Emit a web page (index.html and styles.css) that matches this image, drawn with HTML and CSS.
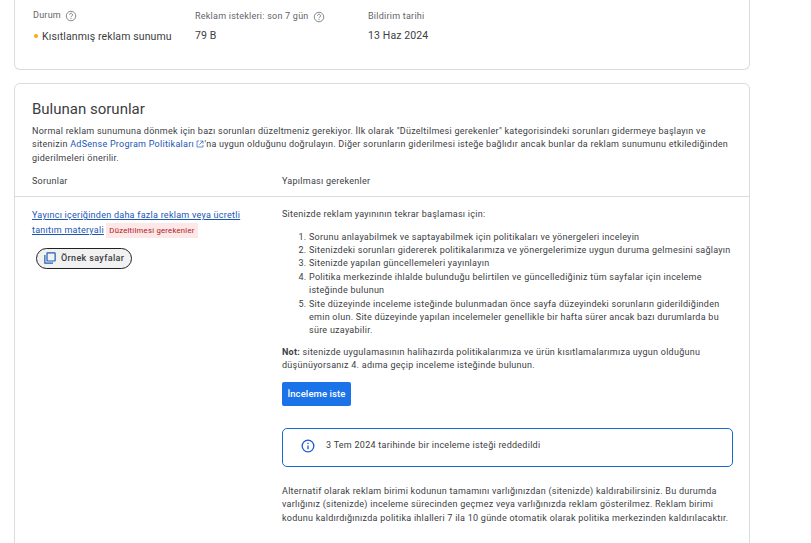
FILE: index.html
```html
<!DOCTYPE html>
<html lang="tr">
<head>
<meta charset="utf-8">
<title>Bulunan sorunlar</title>
<link rel="stylesheet" href="styles.css">
</head>
<body>
<main class="page">
  <section class="card summary">
    <div class="stat stat-status">
      <div class="stat-label">Durum
        <svg class="help" viewBox="0 0 24 24"><circle cx="12" cy="12" r="9.5"/><path d="M9 9.5a3 3 0 1 1 4.6 2.5c-1 .7-1.6 1.3-1.6 2.5"/><circle class="dot" cx="12" cy="17.2" r="1"/></svg>
      </div>
      <div class="stat-value"><span class="status-dot"></span>Kısıtlanmış reklam sunumu</div>
    </div>
    <div class="stat stat-requests">
      <div class="stat-label label-low">Reklam istekleri: son 7 gün
        <svg class="help" viewBox="0 0 24 24"><circle cx="12" cy="12" r="9.5"/><path d="M9 9.5a3 3 0 1 1 4.6 2.5c-1 .7-1.6 1.3-1.6 2.5"/><circle class="dot" cx="12" cy="17.2" r="1"/></svg>
      </div>
      <div class="stat-value">79 B</div>
    </div>
    <div class="stat">
      <div class="stat-label label-low">Bildirim tarihi</div>
      <div class="stat-value">13 Haz 2024</div>
    </div>
  </section>

  <section class="card issues">
    <header class="issues-head">
      <h2>Bulunan sorunlar</h2>
      <p>Normal reklam sunumuna dönmek için bazı sorunları düzeltmeniz gerekiyor. İlk olarak "Düzeltilmesi gerekenler" kategorisindeki sorunları gidermeye başlayın ve sitenizin <a class="plain-link" href="#">AdSense Program Politikaları <svg class="ext" viewBox="0 0 12 12"><path d="M4.5 1.5H1.5v9h9v-3M6.5 1.5h4v4M10.5 1.5 5 7"/></svg></a>'na uygun olduğunu doğrulayın. Diğer sorunların giderilmesi isteğe bağlıdır ancak bunlar da reklam sunumunu etkilediğinden giderilmeleri önerilir.</p>
    </header>
    <div class="columns columns-head">
      <div class="col-left">Sorunlar</div>
      <div class="col-right">Yapılması gerekenler</div>
    </div>
    <div class="columns columns-body">
      <div class="col-left">
        <div class="issue-title"><a href="#">Yayıncı içeriğinden daha fazla reklam veya ücretli tanıtım materyali</a> <span class="tag">Düzeltilmesi gerekenler</span></div>
        <button class="chip" type="button">
          <svg viewBox="0 0 14 14"><path class="chip-back" d="M1 3.5V13h9.5"/><rect x="3.5" y="1" width="9.5" height="9.5" rx=".6"/></svg>
          Örnek sayfalar
        </button>
      </div>
      <div class="col-right">
        <p class="intro">Sitenizde reklam yayınının tekrar başlaması için:</p>
        <ol>
          <li>Sorunu anlayabilmek ve saptayabilmek için politikaları ve yönergeleri inceleyin</li>
          <li>Sitenizdeki sorunları gidererek politikalarımıza ve yönergelerimize uygun duruma gelmesini sağlayın</li>
          <li>Sitenizde yapılan güncellemeleri yayınlayın</li>
          <li>Politika merkezinde ihlalde bulunduğu belirtilen ve güncellediğiniz tüm sayfalar için inceleme isteğinde bulunun</li>
          <li>Site düzeyinde inceleme isteğinde bulunmadan önce sayfa düzeyindeki sorunların giderildiğinden emin olun. Site düzeyinde yapılan incelemeler genellikle bir hafta sürer ancak bazı durumlarda bu süre uzayabilir.</li>
        </ol>
        <p class="note"><strong>Not:</strong> sitenizde uygulamasının halihazırda politikalarımıza ve ürün kısıtlamalarımıza uygun olduğunu düşünüyorsanız 4. adıma geçip inceleme isteğinde bulunun.</p>
        <button class="primary" type="button">İnceleme iste</button>
        <div class="notice">
          <svg viewBox="0 0 24 24"><circle cx="12" cy="12" r="10"/><path d="M12 11v6.5M12 6.5v2.2"/></svg>
          <span>3 Tem 2024 tarihinde bir inceleme isteği reddedildi</span>
        </div>
        <p class="alt">Alternatif olarak reklam birimi kodunun tamamını varlığınızdan (sitenizde) kaldırabilirsiniz. Bu durumda varlığınız (sitenizde) inceleme sürecinden geçmez veya varlığınızda reklam gösterilmez. Reklam birimi kodunu kaldırdığınızda politika ihlalleri 7 ila 10 günde otomatik olarak politika merkezinden kaldırılacaktır.</p>
      </div>
    </div>
  </section>
</main>
</body>
</html>
```

FILE: styles.css
```css
* { box-sizing: border-box; }
html, body { margin: 0; height: 100%; overflow: hidden; background: #fff; }
body {
  font-family: Roboto, "Liberation Sans", sans-serif;
  color: #3c4043;
  font-size: 9px;
  line-height: 13.4px;
  letter-spacing: .26px;
}
p { margin: 0; }
.page { width: 736px; margin-left: 14px; }
.card { border: 1px solid #dadce0; border-radius: 6px; background: #fff; }

.summary {
  display: flex;
  height: 70px;
  padding: 9px 0 0 18px;
  border-top: 0;
  border-radius: 0 0 6px 6px;
  margin-bottom: 13px;
}
.stat-status { width: 162px; }
.stat-requests { width: 173px; }
.stat-label { display: flex; align-items: center; gap: 4px; height: 13px; font-size: 9px; letter-spacing: .24px; color: #5f6368; }
.label-low { margin-top: 1px; }
.stat-value { margin-top: 8px; font-size: 10.5px; line-height: 14px; letter-spacing: .12px; color: #3c4043; }
.stat-requests .stat-value, .stat:last-child .stat-value { margin-top: 6px; }
.status-dot { display: inline-block; width: 4px; height: 4px; margin: 0 4px 2px 1px; border-radius: 50%; background: #f9ab00; }
.help { width: 12px; height: 12px; fill: none; stroke: #5f6368; stroke-width: 1.5; }
.help .dot { fill: #5f6368; stroke: none; }

.issues { height: 480px; }
.issues-head { padding: 16px 17px 0; }
h2 { margin: 0 0 7px; font-size: 15px; line-height: 18px; font-weight: 400; letter-spacing: 0; color: #3c4043; }
.plain-link { color: #1a56b5; text-decoration: none; }
.ext { width: 8px; height: 8px; fill: none; stroke: #1a56b5; stroke-width: 1; vertical-align: -1px; }

.columns { display: flex; padding: 0 17px; }
.columns-head { height: 32px; padding-top: 10px; border-bottom: 1px solid #dadce0; }
.columns-body { padding-top: 11px; }
.col-left { width: 250px; flex: none; }
.col-right { flex: 1; min-width: 0; }

.issue-title { width: 225px; line-height: 14.5px; }
.issue-title a { color: #1a56b5; }
.tag { display: inline-block; padding: 0 3px; font-size: 7.7px; line-height: 15px; letter-spacing: .25px; color: #b3141d; background: #fce8e6; }
.chip {
  display: flex;
  align-items: center;
  gap: 5px;
  width: 96px;
  height: 21px;
  margin: 10px 0 0 4px;
  padding: 0 0 0 7px;
  border: 1px solid #202124;
  border-radius: 11px;
  background: #f1f1f1;
  font: 500 9px Roboto, sans-serif;
  letter-spacing: .35px;
  color: #3c4043;
}
.chip svg { width: 12px; height: 12px; fill: none; stroke: #1a5fb4; stroke-width: 1.4; }

.intro { margin-bottom: 9px; }
ol { margin: 0 0 8px; padding-left: 27px; }
strong { font-weight: 700; }
.note { width: 440px; }
.primary {
  display: block;
  width: 69px;
  height: 24px;
  margin-top: 9px;
  padding: 0;
  border: 0;
  border-radius: 2px;
  background: #1a73e8;
  color: #fff;
  font: 500 9.5px Roboto, sans-serif;
  letter-spacing: .1px;
}
.notice {
  display: flex;
  align-items: center;
  gap: 11px;
  width: 451px;
  height: 39px;
  margin-top: 22px;
  padding: 0 0 2px 18px;
  border: 1px solid #1967d2;
  border-radius: 5px;
}
.notice svg { width: 14px; height: 14px; fill: none; stroke: #1a56d0; stroke-width: 2.2; }
.alt { margin-top: 18px; }
```
